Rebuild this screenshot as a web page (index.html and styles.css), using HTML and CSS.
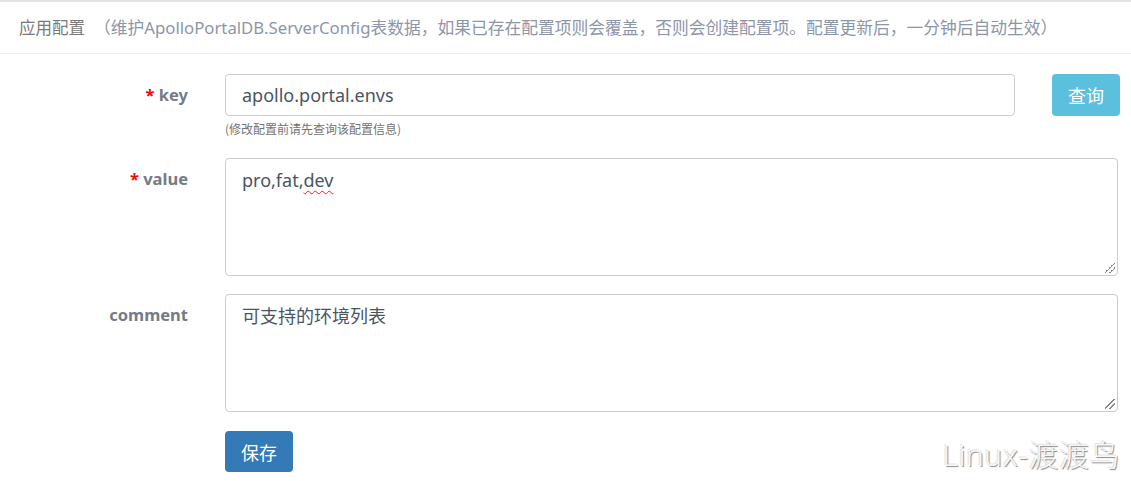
FILE: index.html
```html
<!DOCTYPE html>
<html lang="zh">
<head>
<meta charset="utf-8">
<link rel="stylesheet" href="styles.css">
</head>
<body>
<div class="panel">
  <div class="panel-heading">
    <span class="title">应用配置</span>
    <span class="sub">（维护ApolloPortalDB.ServerConfig表数据，如果已存在配置项则会覆盖，否则会创建配置项。配置更新后，一分钟后自动生效）</span>
  </div>
  <div class="panel-body">
    <div class="row row-key">
      <label class="lbl"><span class="req">*</span> key</label>
      <div class="field">
        <div class="input-line">
          <div class="input">apollo.portal.envs</div>
          <button class="btn btn-info">查询</button>
        </div>
        <div class="help">(修改配置前请先查询该配置信息)</div>
      </div>
    </div>
    <div class="row">
      <label class="lbl"><span class="req">*</span> value</label>
      <div class="field">
        <div class="textarea">pro,fat,<span class="spell">dev</span><span class="grip"></span></div>
      </div>
    </div>
    <div class="row row-last">
      <label class="lbl">comment</label>
      <div class="field">
        <div class="textarea">可支持的环境列表<span class="grip"></span></div>
      </div>
    </div>
    <div class="row">
      <div class="lbl"></div>
      <div class="field">
        <button class="btn btn-primary">保存</button>
      </div>
    </div>
  </div>
  <div class="watermark">Linux-渡渡鸟</div>
</div>
</body>
</html>
```
FILE: styles.css
```css
* { box-sizing: border-box; }
html, body { margin: 0; padding: 0; background: #fff; }
body {
  font-family: "Noto Sans", "Noto Sans CJK SC", sans-serif;
  color: #555;
  width: 1131px;
  height: 481px;
  overflow: hidden;
}
.panel {
  position: relative;
  height: 481px;
  border-top: 2px solid #e3e3e3;
}
.panel-heading {
  height: 52px;
  border-bottom: 1px solid #eceef2;
  padding: 0 0 2px 19px;
  display: flex;
  align-items: center;
  color: #777;
}
.title { font-size: 16.5px; color: #7a7a7a; }
.sub { font-size: 16.75px; color: #8d96a8; margin-left: 9px; }
.panel-body { padding-top: 20px; }
.row { display: flex; margin-bottom: 18px; }
.row-key { margin-bottom: 21px; }
.row-last { margin-bottom: 19px; }
.lbl {
  width: 188px;
  flex: none;
  text-align: right;
  font-weight: bold;
  font-size: 16.5px;
  color: #747b86;
  padding-top: 10px;
  line-height: 22px;
}
.req { color: #f00; }
.field { margin-left: 37px; flex: none; width: 893px; }
.input-line { display: flex; gap: 37px; }
.input {
  flex: none;
  width: 790px;
  height: 42px;
  border: 1px solid #ccc;
  border-radius: 4px;
  padding: 0 16px;
  font-size: 18px;
  line-height: 40px;
  color: #4a5562;
}
.btn {
  flex: none;
  font-family: "Noto Sans CJK SC", sans-serif;
  border: none;
  border-radius: 4px;
  color: #fff;
  font-size: 18px;
  height: 42px;
  width: 68px;
  padding: 0;
  line-height: 42px;
}
.btn-info { background: #5bc0de; }
.btn-primary { background: #337ab7; height: 41px; }
.help {
  font-size: 12px;
  color: #737373;
  margin-top: 5px;
  line-height: 16px;
  font-family: "Noto Sans CJK SC", sans-serif;
}
.textarea {
  position: relative;
  height: 118px;
  border: 1px solid #ccc;
  border-radius: 4px;
  padding: 7px 16px;
  font-size: 18px;
  line-height: 28px;
  color: #4a5562;
}
.spell {
  text-decoration: underline wavy #e22;
  text-underline-offset: 3px;
  text-decoration-thickness: 1px;
}
.grip {
  position: absolute;
  right: 2px;
  bottom: 2px;
  width: 10px;
  height: 10px;
  background: linear-gradient(135deg, transparent 45%, #888 45%, #888 52%, transparent 52%, transparent 70%, #888 70%, #888 77%, transparent 77%);
}
.watermark {
  position: absolute;
  right: 11px;
  bottom: 6px;
  font-family: "Noto Sans", "Noto Sans CJK SC", sans-serif;
  font-size: 30px;
  color: #f7f7f7;
  text-shadow: 1px 1px 1px #888, -1px -1px 0 #e6e6e6;
  letter-spacing: 0.5px;
  font-weight: 300;
}
```
